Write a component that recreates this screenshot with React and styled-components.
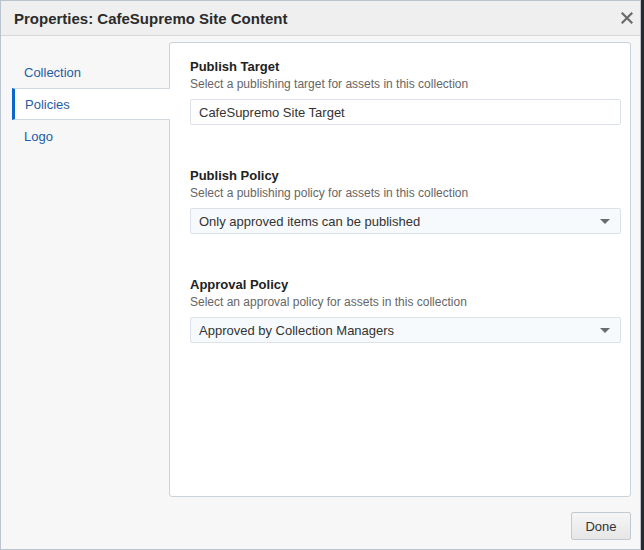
import React from "react";
import styled, { createGlobalStyle } from "styled-components";

const GlobalStyle = createGlobalStyle`
  html, body {
    margin: 0;
    padding: 0;
    background: #2b2926;
  }
  body {
    font-family: "Liberation Sans", Arial, sans-serif;
  }
  * {
    box-sizing: border-box;
  }
`;

// dialog shell
const Dialog = styled.div`
  width: 641px;
  height: 550px;
  border: 1px solid #b9c4cf;
  background: #f7f7f7;
  display: flex;
  flex-direction: column;
`;

const Header = styled.div`
  height: 35px;
  flex: none;
  display: flex;
  align-items: center;
  justify-content: space-between;
  padding: 0 7px 0 13px;
  background: #efefef;
  border-bottom: 1px solid #d3d8dd;
`;

const Title = styled.h1`
  margin: 0;
  font-size: 15px;
  font-weight: bold;
  color: #2b2b2b;
`;

const CloseButton = styled.button`
  border: 0;
  background: none;
  padding: 0;
  width: 12px;
  height: 12px;
  display: flex;
  cursor: pointer;
`;

const Body = styled.div`
  flex: 1;
  display: flex;
  padding-top: 6px;
  min-height: 0;
`;

const Nav = styled.ul`
  list-style: none;
  margin: 14px 0 0;
  padding: 0 0 0 11px;
  width: 168px;
  flex: none;
  position: relative;
  z-index: 1;
`;

const NavItem = styled.li`
  height: 32px;
  display: flex;
  align-items: center;
  font-size: 13px;
  color: #1d5da6;
  cursor: pointer;
  padding-left: ${(p) => (p.$active ? "10px" : "12px")};
  margin-right: -1px;
  background: ${(p) => (p.$active ? "#fff" : "transparent")};
  border-left: ${(p) => (p.$active ? "3px solid #0b67c9" : "0")};
  border-top: ${(p) => (p.$active ? "1px solid #cfd7df" : "0")};
  border-bottom: ${(p) => (p.$active ? "1px solid #cfd7df" : "0")};
`;

const Panel = styled.div`
  flex: 1;
  margin-right: 9px;
  background: #fff;
  border: 1px solid #c9d3dc;
  border-radius: 3px;
  padding: 16px 9px 0 20px;
`;

const Section = styled.div`
  margin-bottom: 43px;
`;

const Label = styled.div`
  font-size: 13px;
  line-height: 16px;
  font-weight: bold;
  color: #222;
`;

const Hint = styled.div`
  font-size: 12px;
  line-height: 16px;
  color: #666;
  margin-top: 1px;
`;

const Field = styled.div`
  margin-top: 7px;
  height: 26px;
  border: 1px solid #dce2e7;
  border-radius: 2px;
  background: ${(p) => (p.$select ? "#f7fafc" : "#fff")};
  display: flex;
  align-items: center;
  justify-content: space-between;
  padding: 0 8px 0 8px;
  font-size: 13px;
  color: #333;
`;

const Caret = styled.span`
  width: 0;
  height: 0;
  border-left: 5px solid transparent;
  border-right: 5px solid transparent;
  border-top: 5px solid #6b6b6b;
  margin-right: 2px;
`;

const Footer = styled.div`
  height: 52px;
  flex: none;
  display: flex;
  justify-content: flex-end;
  align-items: flex-start;
  padding: 15px 9px 0 0;
`;

const Button = styled.button`
  width: 60px;
  height: 28px;
  font-family: inherit;
  font-size: 13px;
  color: #333;
  background: linear-gradient(#f6f6f6, #e6e6e6);
  border: 1px solid #c3cad1;
  border-radius: 2px;
  cursor: pointer;
`;

const sections = [
  {
    label: "Publish Target",
    hint: "Select a publishing target for assets in this collection",
    value: "CafeSupremo Site Target",
    select: false,
  },
  {
    label: "Publish Policy",
    hint: "Select a publishing policy for assets in this collection",
    value: "Only approved items can be published",
    select: true,
  },
  {
    label: "Approval Policy",
    hint: "Select an approval policy for assets in this collection",
    value: "Approved by Collection Managers",
    select: true,
  },
];

export default function App() {
  return (
    <>
      <GlobalStyle />
      <Dialog>
        <Header>
          <Title>Properties: CafeSupremo Site Content</Title>
          <CloseButton aria-label="Close">
            <svg width="12" height="12" viewBox="0 0 12 12">
              <path d="M1.5 1.5L10.5 10.5M10.5 1.5L1.5 10.5" stroke="#6a6a6a" strokeWidth="2.2" strokeLinecap="square" />
            </svg>
          </CloseButton>
        </Header>
        <Body>
          <Nav>
            <NavItem>Collection</NavItem>
            <NavItem $active>Policies</NavItem>
            <NavItem>Logo</NavItem>
          </Nav>
          <Panel>
            {sections.map((s) => (
              <Section key={s.label}>
                <Label>{s.label}</Label>
                <Hint>{s.hint}</Hint>
                <Field $select={s.select}>
                  <span>{s.value}</span>
                  {s.select && <Caret />}
                </Field>
              </Section>
            ))}
          </Panel>
        </Body>
        <Footer>
          <Button>Done</Button>
        </Footer>
      </Dialog>
    </>
  );
}
